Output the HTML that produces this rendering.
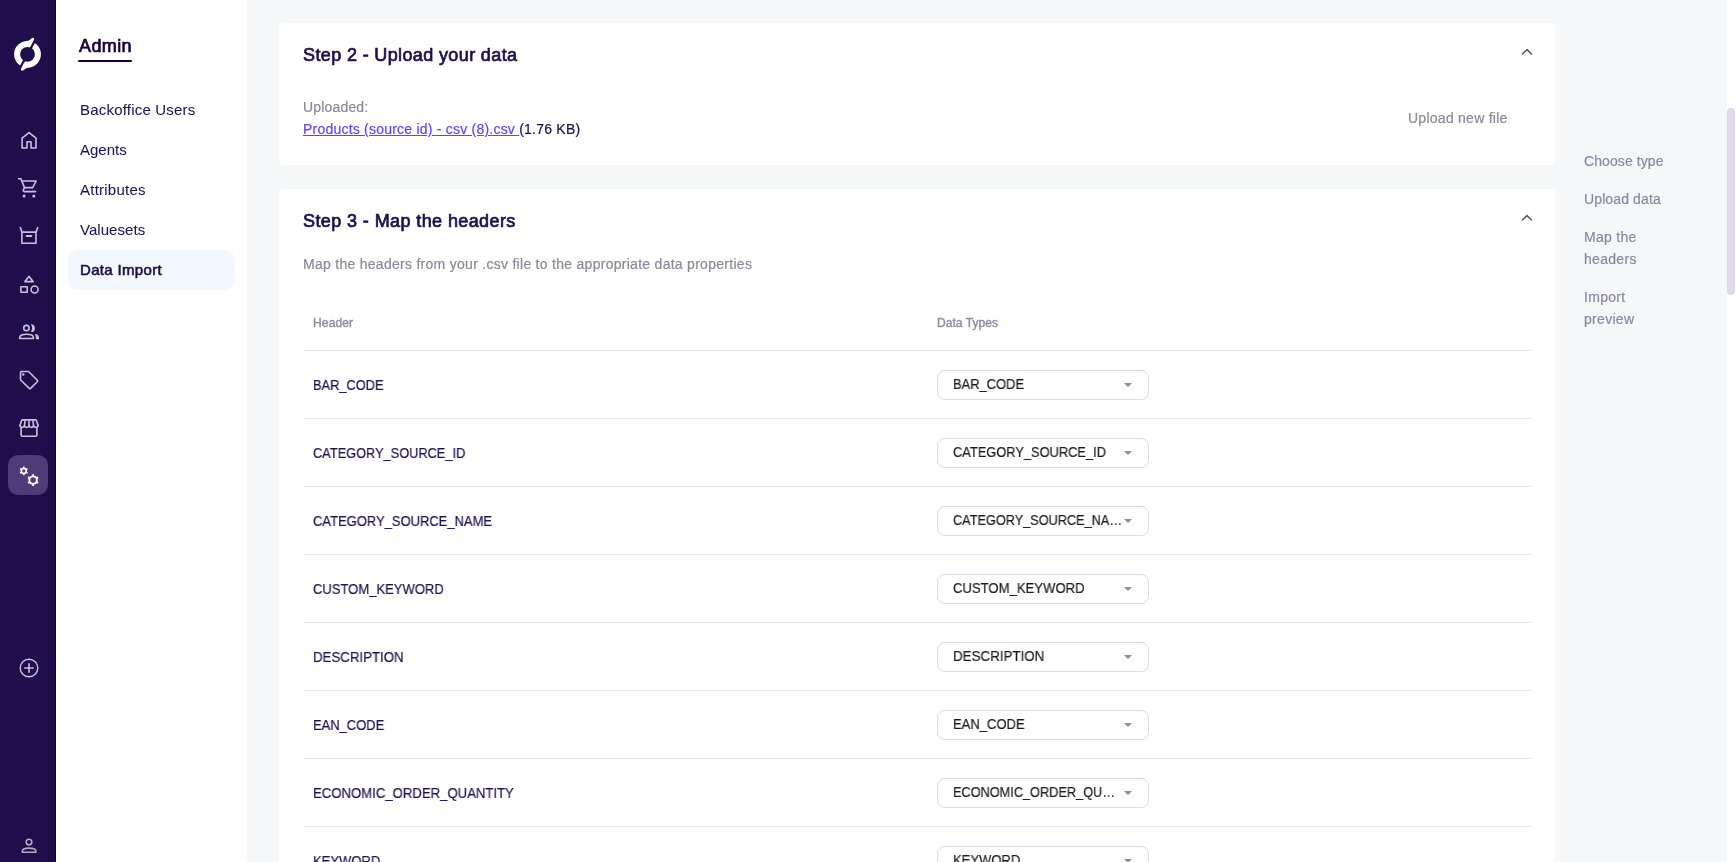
<!DOCTYPE html>
<html><head><meta charset="utf-8">
<style>
*{margin:0;padding:0;box-sizing:border-box}
html,body{width:1736px;height:862px;overflow:hidden;background:#f6f7f9;font-family:"Liberation Sans",sans-serif}
.abs,.ddt{will-change:transform;-webkit-text-stroke-width:0.2px}
.nav{position:absolute;left:0;top:0;width:56px;height:862px;background:#200d4c;border-right:1px solid #12003e}
.navsvg{position:absolute;left:0;top:0}
.side{position:absolute;left:56px;top:0;width:191px;height:862px;background:#fff}
.abs{position:absolute;white-space:nowrap}
.admin{left:78.5px;top:36px;font-size:18px;color:#14003f;line-height:20px;letter-spacing:0.4px;-webkit-text-stroke:0.7px #14003f}
.uline{left:78px;top:60px;width:54px;height:2px;background:#14003f;border-radius:1px}
.mi{left:80px;font-size:15px;color:#20125a;line-height:20px;-webkit-text-stroke-width:0.05px}
.sel{left:68px;top:250px;width:167px;height:40px;background:#f3f8fe;border-radius:10px}
.card{position:absolute;left:279px;width:1276px;background:#fff;border-radius:4px}
.title{font-size:18px;color:#1d0f4b;line-height:20px;-webkit-text-stroke:0.7px #1d0f4b}
.gray{color:#8a879e}
.right{left:1584px;font-size:14px;color:#8a879e;line-height:22px}
.row{position:absolute;left:303px;width:1228px;height:1px;background:#e6e6ea}
.cell{left:313px;font-size:14px;color:#1f1152;line-height:18px;transform-origin:0 0}
.dd{position:absolute;left:937px;width:212px;height:30px;border:1px solid #dcd8ee;border-radius:8px;background:#fff}
.ddt{position:absolute;left:15px;top:4px;font-size:14px;color:#1c1b22;line-height:18px;white-space:nowrap;transform-origin:0 0}
.caret{position:absolute;left:186px;top:12px;width:0;height:0;border-left:4px solid transparent;border-right:4px solid transparent;border-top:4px solid #8f8ca5}
.chev{position:absolute;left:1517px}
.sb{position:absolute;left:1727px;top:0;width:9px;height:862px;background:#fff}
.thumb{position:absolute;left:1727px;top:108px;width:8px;height:187px;border-radius:4px;background:#dedaec}
</style></head><body>
<div class="nav"></div>
<svg class="navsvg" width="56" height="862" viewBox="0 0 56 862">
<defs><mask id="cut"><rect x="-30" y="-30" width="60" height="60" fill="#fff"/><rect x="-25" y="-1.15" width="50" height="2.3" fill="#000" transform="rotate(-61.7)"/></mask></defs>
<g transform="translate(27.5 54.3)" fill="#fff">
 <path mask="url(#cut)" fill-rule="evenodd" d="M-13.4,0 A13.4,13.4 0 1 0 13.4,0 A13.4,13.4 0 1 0 -13.4,0 Z M-7.4,0 A7.4,7.4 0 1 1 7.4,0 A7.4,7.4 0 1 1 -7.4,0 Z"/>
 <g transform="rotate(-61.7)"><path d="M9,-1.15 L15.9,-1.15 Q17.6,-1.3 17.2,-2.8 Q16.7,-3.8 14.8,-4.5 Q12.8,-5.4 11.3,-6.9 L8,-6 Z"/><path transform="rotate(180)" d="M9,-1.15 L15.9,-1.15 Q17.6,-1.3 17.2,-2.8 Q16.7,-3.8 14.8,-4.5 Q12.8,-5.4 11.3,-6.9 L8,-6 Z"/></g>
</g>
<g fill="none" stroke="#c9bfdf" stroke-width="1.6" stroke-linejoin="round" stroke-linecap="round">
 <path d="M22.1,148 V138.2 L29,132.6 L36,138.2 V148 H31 V141.8 H27 V148 Z"/>
 <path d="M18.6,178.7 H20.9 L24.5,187.6 H32.7 L36.1,181 H22.3"/>
 <path d="M24.5,187.6 L23.4,189.9 Q22.9,191.6 24.5,191.6 H35.6"/>
 <path d="M20.3,227.6 L21.9,232.1 V243.2 H36 V232.1 L37.7,227.6 M21.9,232.1 H36"/>
 <path d="M26.6,236 H31.4" stroke-width="1.8"/>
 <path d="M29,276.4 L33.1,281.6 H24.9 Z"/>
 <rect x="20.9" y="286.7" width="6.3" height="5.6"/>
 <circle cx="34.6" cy="289.5" r="3.5"/>
 <circle cx="26.4" cy="328.1" r="2.7"/>
 <path d="M19.7,338.5 V337.5 Q19.7,334.2 26.6,334.2 Q33.4,334.2 33.4,337.5 V338.5 Z"/>
 <path d="M20.5,372.7 Q20.5,371.5 21.7,371.5 H28.6 L37.3,380.2 Q38,381 37.3,381.8 L30.6,388.4 Q29.9,389 29.2,388.4 L20.5,379.8 Z"/>
 <path d="M19.9,425.6 L21.6,420.6 Q21.9,419.9 22.6,419.9 H35.4 Q36.1,419.9 36.4,420.6 L38.1,425.6"/>
 <path d="M19.9,425.6 Q20.3,427.4 22.2,427.4 Q24.1,427.4 24.45,425.6 Q24.8,427.4 26.7,427.4 Q28.6,427.4 29,425.6 Q29.4,427.4 31.3,427.4 Q33.2,427.4 33.55,425.6 Q33.9,427.4 35.8,427.4 Q37.7,427.4 38.1,425.6"/>
 <path d="M25.1,420.2 L24.45,425.6 M29,420.2 V425.6 M32.9,420.2 L33.55,425.6"/>
 <path d="M21.1,427.4 V435 Q21.1,436.2 22.3,436.2 H35.7 Q36.9,436.2 36.9,435 V427.4"/>
 <circle cx="29" cy="668" r="8.8" stroke-width="1.4"/>
 <path d="M29,663.8 V672.2 M24.8,668 H33.2"/>
 <circle cx="29" cy="842.1" r="2.8" stroke="#b3aac9"/>
 <path stroke="#b3aac9" d="M22.3,852.3 V851.3 Q22.3,848.1 29,848.1 Q35.8,848.1 35.8,851.3 V852.3 Z"/>
</g>
<g fill="#c9bfdf">
 <circle cx="24.1" cy="195.9" r="1.5"/><circle cx="33.8" cy="195.9" r="1.5"/>
 <path d="M31,324.3 A3.9,3.9 0 0 1 31,332.1 A8,8 0 0 0 31,324.3 Z"/>
 <path d="M34.9,333.7 Q39.1,334.5 39.1,338.5 V339.3 H36 Q36,335.8 34.9,333.7 Z"/>
 <circle cx="23.3" cy="374.5" r="1.2"/>
</g>
<rect x="8" y="455" width="40" height="40" rx="10" fill="#4c3c78"/>
<g fill="none" stroke="#fff">
 <circle cx="23.8" cy="470.9" r="2.45" stroke-width="1.7"/>
 <circle cx="33.1" cy="480.1" r="3.75" stroke-width="1.9"/>
</g>
<g stroke="#fff" stroke-linecap="butt">
 <line x1="23.80" y1="468.00" x2="23.80" y2="466.60" stroke-width="1.5"/><line x1="21.29" y1="469.45" x2="20.08" y2="468.75" stroke-width="1.5"/><line x1="21.29" y1="472.35" x2="20.08" y2="473.05" stroke-width="1.5"/><line x1="23.80" y1="473.80" x2="23.80" y2="475.20" stroke-width="1.5"/><line x1="26.31" y1="472.35" x2="27.52" y2="473.05" stroke-width="1.5"/><line x1="26.31" y1="469.45" x2="27.52" y2="468.75" stroke-width="1.5"/><line x1="33.10" y1="475.80" x2="33.10" y2="474.30" stroke-width="2"/><line x1="29.38" y1="477.95" x2="28.08" y2="477.20" stroke-width="2"/><line x1="29.38" y1="482.25" x2="28.08" y2="483.00" stroke-width="2"/><line x1="33.10" y1="484.40" x2="33.10" y2="485.90" stroke-width="2"/><line x1="36.82" y1="482.25" x2="38.12" y2="483.00" stroke-width="2"/><line x1="36.82" y1="477.95" x2="38.12" y2="477.20" stroke-width="2"/>
</g>
</svg>
<div class="side"></div>
<div class="abs admin">Admin</div>
<div class="abs uline"></div>
<div class="abs sel"></div>
<div class="abs mi" style="top:100px;letter-spacing:0.2px">Backoffice Users</div>
<div class="abs mi" style="top:140px">Agents</div>
<div class="abs mi" style="top:180px;letter-spacing:0.24px">Attributes</div>
<div class="abs mi" style="top:220px;letter-spacing:0.05px">Valuesets</div>
<div class="abs mi" style="top:260px;letter-spacing:0.33px;color:#1d0f4b;-webkit-text-stroke:0.6px #1d0f4b">Data Import</div>

<div class="card" style="top:23px;height:142px"></div>
<div class="abs title" style="left:303px;top:45px;letter-spacing:0.37px">Step 2 - Upload your data</div>
<svg class="chev" style="top:44px" width="20" height="16" viewBox="1517 44 20 16"><path d="M1522.4,54.05 L1527,49.6 L1531.5,54.05" fill="none" stroke="#5a5a5a" stroke-width="1.5" stroke-linecap="round" stroke-linejoin="round"/></svg>
<div class="abs gray" style="left:303px;top:98px;font-size:14px;line-height:18px;letter-spacing:0.17px">Uploaded:</div>
<div class="abs" style="left:303px;top:120px;font-size:14px;line-height:18px;letter-spacing:0.22px"><span style="color:#6640f8;text-decoration:underline">Products (source id) - csv (8).csv </span><span style="color:#1e0f4d">(1.76 KB)</span></div>
<div class="abs gray" style="left:1408px;top:109px;font-size:14px;line-height:18px;letter-spacing:0.26px">Upload new file</div>

<div class="card" style="top:189px;height:700px"></div>
<div class="abs title" style="left:303px;top:211px;letter-spacing:0.4px">Step 3 - Map the headers</div>
<svg class="chev" style="top:210px" width="20" height="16" viewBox="1517 44 20 16"><path d="M1522.4,54.05 L1527,49.6 L1531.5,54.05" fill="none" stroke="#5a5a5a" stroke-width="1.5" stroke-linecap="round" stroke-linejoin="round"/></svg>
<div class="abs gray" style="left:303px;top:255px;font-size:14px;line-height:18px;letter-spacing:0.28px">Map the headers from your .csv file to the appropriate data properties</div>
<div class="abs gray" style="left:313px;top:315px;font-size:12px;line-height:16px;letter-spacing:0.15px;color:#8e8ba6;-webkit-text-stroke-width:0.4px">Header</div>
<div class="abs gray" style="left:937px;top:315px;font-size:12px;line-height:16px;letter-spacing:0.06px;color:#8e8ba6;-webkit-text-stroke-width:0.4px">Data Types</div>
<div class="row" style="top:350px"></div>
<div class="abs cell" style="top:376px;transform:scaleX(0.916)">BAR_CODE</div>
<div class="dd" style="top:370px"><div class="ddt" style="transform:scaleX(0.922)">BAR_CODE</div><div class="caret"></div></div>
<div class="row" style="top:418px"></div>
<div class="abs cell" style="top:444px;transform:scaleX(0.913)">CATEGORY_SOURCE_ID</div>
<div class="dd" style="top:438px"><div class="ddt" style="transform:scaleX(0.917)">CATEGORY_SOURCE_ID</div><div class="caret"></div></div>
<div class="row" style="top:486px"></div>
<div class="abs cell" style="top:512px;transform:scaleX(0.927)">CATEGORY_SOURCE_NAME</div>
<div class="dd" style="top:506px"><div class="ddt" style="transform:scaleX(0.908)">CATEGORY_SOURCE_NA…</div><div class="caret"></div></div>
<div class="row" style="top:554px"></div>
<div class="abs cell" style="top:580px;transform:scaleX(0.93)">CUSTOM_KEYWORD</div>
<div class="dd" style="top:574px"><div class="ddt" style="transform:scaleX(0.936)">CUSTOM_KEYWORD</div><div class="caret"></div></div>
<div class="row" style="top:622px"></div>
<div class="abs cell" style="top:648px;transform:scaleX(0.947)">DESCRIPTION</div>
<div class="dd" style="top:642px"><div class="ddt" style="transform:scaleX(0.954)">DESCRIPTION</div><div class="caret"></div></div>
<div class="row" style="top:690px"></div>
<div class="abs cell" style="top:716px;transform:scaleX(0.925)">EAN_CODE</div>
<div class="dd" style="top:710px"><div class="ddt" style="transform:scaleX(0.93)">EAN_CODE</div><div class="caret"></div></div>
<div class="row" style="top:758px"></div>
<div class="abs cell" style="top:784px;transform:scaleX(0.939)">ECONOMIC_ORDER_QUANTITY</div>
<div class="dd" style="top:778px"><div class="ddt" style="transform:scaleX(0.909)">ECONOMIC_ORDER_QU…</div><div class="caret"></div></div>
<div class="row" style="top:826px"></div>
<div class="abs cell" style="top:852px;transform:scaleX(0.93)">KEYWORD</div>
<div class="dd" style="top:846px"><div class="ddt" style="transform:scaleX(0.93)">KEYWORD</div><div class="caret"></div></div>
<div class="row" style="top:894px"></div>

<div class="abs right" style="top:150px;letter-spacing:0.09px">Choose type</div>
<div class="abs right" style="top:188px;letter-spacing:0.12px">Upload data</div>
<div class="abs right" style="top:226px;letter-spacing:0.3px">Map the<br>headers</div>
<div class="abs right" style="top:286px;letter-spacing:0.3px">Import<br>preview</div>
<div class="sb"></div><div class="thumb"></div>
</body></html>
